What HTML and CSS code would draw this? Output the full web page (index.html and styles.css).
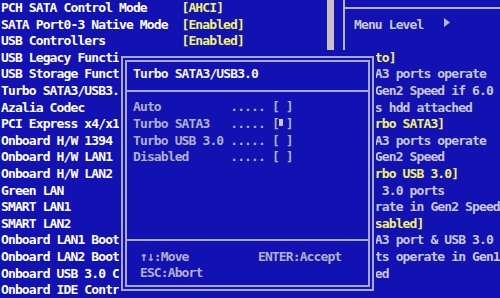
FILE: index.html
```html
<!DOCTYPE html>
<html>
<head>
<meta charset="utf-8">
<link rel="stylesheet" href="styles.css">
</head>
<body>
<div class="screen">
  <div class="menu">
    <span class="lbl">PCH SATA Control Mode</span><span class="val">[AHCI]</span>
    <span class="lbl">SATA Port0-3 Native Mode</span><span class="val">[Enabled]</span>
    <span class="lbl">USB Controllers</span><span class="val">[Enabled]</span>
    <span class="lbl">USB Legacy Function</span><span class="val">[Enabled]</span>
    <span class="lbl">USB Storage Function</span><span class="val">[Enabled]</span>
    <span class="lbl">Turbo SATA3/USB3.0</span><span class="val">[Auto]</span>
    <span class="lbl">Azalia Codec</span><span class="val">[Auto]</span>
    <span class="lbl">PCI Express x4/x1</span><span class="val">[Auto]</span>
    <span class="lbl">Onboard H/W 1394</span><span class="val">[Enabled]</span>
    <span class="lbl">Onboard H/W LAN1</span><span class="val">[Enabled]</span>
    <span class="lbl">Onboard H/W LAN2</span><span class="val">[Enabled]</span>
    <span class="lbl">Green LAN</span><span class="val">[Disabled]</span>
    <span class="lbl">SMART LAN1</span><span class="val">[Press Enter]</span>
    <span class="lbl">SMART LAN2</span><span class="val">[Press Enter]</span>
    <span class="lbl">Onboard LAN1 Boot ROM</span><span class="val">[Disabled]</span>
    <span class="lbl">Onboard LAN2 Boot ROM</span><span class="val">[Disabled]</span>
    <span class="lbl">Onboard USB 3.0 Controller</span><span class="val">[Enabled]</span>
    <span class="lbl">Onboard IDE Controller</span><span class="val">[Enabled]</span>
  </div>
  <div class="scroll"></div>
  <div class="help">
    <div class="help-rule"></div>
    <div class="hl">Menu Level   <svg class="tri" viewBox="0 0 6 9" width="6" height="9"><path d="M0 0L6 4.5L0 9Z"/></svg></div>
    <div class="hl"></div>
    <div class="hl hy">[Auto]</div>
    <div class="hl">SATA3 ports operate</div>
    <div class="hl">in Gen2 Speed if 6.0</div>
    <div class="hl">Gb/s hdd attached</div>
    <div class="hl hy">[Turbo SATA3]</div>
    <div class="hl">SATA3 ports operate</div>
    <div class="hl">in Gen2 Speed</div>
    <div class="hl hy">[Turbo USB 3.0]</div>
    <div class="hl">USB 3.0 ports</div>
    <div class="hl">operate in Gen2 Speed</div>
    <div class="hl hy">[Disabled]</div>
    <div class="hl">SATA3 port &amp; USB 3.0</div>
    <div class="hl">ports operate in Gen1</div>
    <div class="hl">speed</div>
  </div>

  <div class="popup">
    <div class="frame">
      <div class="inner">
        <div class="p-title">Turbo SATA3/USB3.0</div>
        <div class="p-sep"></div>
        <div class="p-item"><span>Auto</span><span>.....</span><span>[ ]</span></div>
        <div class="p-item"><span>Turbo SATA3</span><span>.....</span><span>[<i class="mark"></i>]</span></div>
        <div class="p-item"><span>Turbo USB 3.0</span><span>.....</span><span>[ ]</span></div>
        <div class="p-item"><span>Disabled</span><span>.....</span><span>[ ]</span></div>
        <div class="p-gap"></div>
        <div class="p-sep"></div>
        <div class="p-foot"><span> ↑↓:Move</span><span>ENTER:Accept</span></div>
        <div class="p-foot"><span> ESC:Abort</span><span></span></div>
      </div>
    </div>
  </div>
</div>
</body>
</html>
```
FILE: styles.css
```css
html, body {
  margin: 0;
  padding: 0;
  background: #1212b2;
  overflow: hidden;
}

.screen {
  position: relative;
  width: 500px;
  height: 298px;
  overflow: hidden;
  box-sizing: border-box;
  padding-left: 1px;
  display: grid;
  grid-template-columns: 326px 7px 9px 1fr;
  font-family: "DejaVu Sans Mono", "Liberation Mono", monospace;
  font-size: 13px;
  font-weight: bold;
  letter-spacing: -0.883px;
  line-height: 16.6px;
}

.menu {
  display: grid;
  grid-template-columns: 180.44px auto;
  grid-auto-rows: 16.6px;
  align-content: start;
  overflow: hidden;
}

.lbl {
  color: #ffffff;
  overflow: hidden;
  white-space: pre;
}

.val {
  color: #f2f26a;
  white-space: pre;
}

.scroll {
  background: #cbc1c1;
}

.help {
  grid-column: 4;
  border-left: 2px solid #b4b4d0;
  overflow: hidden;
  color: #c8c8dc;
}

.help-rule {
  height: 16.6px;
  box-sizing: border-box;
  padding-top: 7px;
}

.help-rule::before {
  content: "";
  display: block;
  height: 2px;
  background: #b4b4d0;
}

.hl {
  height: 16.6px;
  padding-left: 9px;
  color: #c8c8dc;
  white-space: pre;
}

.hy {
  color: #f2f26a;
}

.tri {
  fill: #b8b8d0;
  vertical-align: 1.5px;
}

.popup {
  position: absolute;
  left: 119px;
  top: 49.8px;
  width: 256.8px;
  height: 249px;
  box-sizing: border-box;
  padding: 6px 2px 8px 2px;
  background: #1212b2;
}

.frame {
  height: 100%;
  box-sizing: border-box;
  border: 2px solid #a8a8cc;
  padding: 2px;
}

.inner {
  height: 100%;
  box-sizing: border-box;
  border: 2px solid #a8a8cc;
  padding: 4.4px 0 0 6px;
  display: flex;
  flex-direction: column;
}

.p-title {
  height: 16.6px;
  color: #f4f4f4;
  white-space: pre;
}

.p-sep {
  height: 16.6px;
  box-sizing: border-box;
  padding-top: 7px;
  margin-left: -6px;
}

.p-sep::before {
  content: "";
  display: block;
  height: 2px;
  background: #a8a8cc;
}

.p-item {
  height: 16.6px;
  display: grid;
  grid-template-columns: 97.22px 41.67px auto;
  color: #b0b0cc;
  white-space: pre;
}

.mark {
  display: inline-block;
  width: 4px;
  height: 7px;
  margin: 0 2.44px 0 0.5px;
  background: #c8c8d8;
  vertical-align: 1.5px;
}

.p-gap {
  height: 66.4px;
}

.p-foot {
  height: 16.6px;
  display: grid;
  grid-template-columns: 124.99px auto;
  color: #b0b0cc;
  white-space: pre;
}
```
